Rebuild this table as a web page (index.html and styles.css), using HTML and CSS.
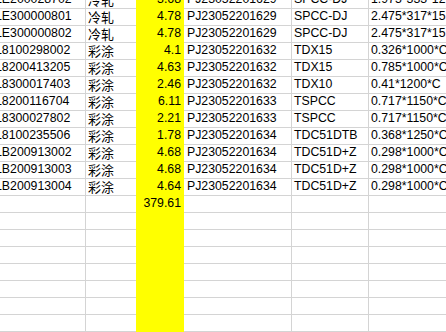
FILE: index.html
```html
<!DOCTYPE html>
<html>
<head>
<meta charset="utf-8">
<link rel="stylesheet" href="styles.css">
</head>
<body>
<div class="sheet">
  <div class="row"><div class="c a">LE200028702</div><div class="c b">冷轧</div><div class="c n">3.68</div><div class="c d">PJ23052201629</div><div class="c e">SPCC-DJ</div><div class="c f">1.975*333*12</div></div>
  <div class="row"><div class="c a">LE300000801</div><div class="c b">冷轧</div><div class="c n">4.78</div><div class="c d">PJ23052201629</div><div class="c e">SPCC-DJ</div><div class="c f">2.475*317*15</div></div>
  <div class="row"><div class="c a">LE300000802</div><div class="c b">冷轧</div><div class="c n">4.78</div><div class="c d">PJ23052201629</div><div class="c e">SPCC-DJ</div><div class="c f">2.475*317*15</div></div>
  <div class="row"><div class="c a">L8100298002</div><div class="c b">彩涂</div><div class="c n">4.1</div><div class="c d">PJ23052201632</div><div class="c e">TDX15</div><div class="c f">0.326*1000*C</div></div>
  <div class="row"><div class="c a">L8200413205</div><div class="c b">彩涂</div><div class="c n">4.63</div><div class="c d">PJ23052201632</div><div class="c e">TDX15</div><div class="c f">0.785*1000*C</div></div>
  <div class="row"><div class="c a">L8300017403</div><div class="c b">彩涂</div><div class="c n">2.46</div><div class="c d">PJ23052201632</div><div class="c e">TDX10</div><div class="c f">0.41*1200*C</div></div>
  <div class="row"><div class="c a">L8200116704</div><div class="c b">彩涂</div><div class="c n">6.11</div><div class="c d">PJ23052201633</div><div class="c e">TSPCC</div><div class="c f">0.717*1150*C</div></div>
  <div class="row"><div class="c a">L8300027802</div><div class="c b">彩涂</div><div class="c n">2.21</div><div class="c d">PJ23052201633</div><div class="c e">TSPCC</div><div class="c f">0.717*1150*C</div></div>
  <div class="row"><div class="c a">L8100235506</div><div class="c b">彩涂</div><div class="c n">1.78</div><div class="c d">PJ23052201634</div><div class="c e">TDC51DTB</div><div class="c f">0.368*1250*C</div></div>
  <div class="row"><div class="c a">LB200913002</div><div class="c b">彩涂</div><div class="c n">4.68</div><div class="c d">PJ23052201634</div><div class="c e">TDC51D+Z</div><div class="c f">0.298*1000*C</div></div>
  <div class="row"><div class="c a">LB200913003</div><div class="c b">彩涂</div><div class="c n">4.68</div><div class="c d">PJ23052201634</div><div class="c e">TDC51D+Z</div><div class="c f">0.298*1000*C</div></div>
  <div class="row"><div class="c a">LB200913004</div><div class="c b">彩涂</div><div class="c n">4.64</div><div class="c d">PJ23052201634</div><div class="c e">TDC51D+Z</div><div class="c f">0.298*1000*C</div></div>
  <div class="row"><div class="c a"></div><div class="c b"></div><div class="c n">379.61</div><div class="c d"></div><div class="c e"></div><div class="c f"></div></div>
  <div class="row"><div class="c a"></div><div class="c b"></div><div class="c n"></div><div class="c d"></div><div class="c e"></div><div class="c f"></div></div>
  <div class="row"><div class="c a"></div><div class="c b"></div><div class="c n"></div><div class="c d"></div><div class="c e"></div><div class="c f"></div></div>
  <div class="row"><div class="c a"></div><div class="c b"></div><div class="c n"></div><div class="c d"></div><div class="c e"></div><div class="c f"></div></div>
  <div class="row"><div class="c a"></div><div class="c b"></div><div class="c n"></div><div class="c d"></div><div class="c e"></div><div class="c f"></div></div>
  <div class="row"><div class="c a"></div><div class="c b"></div><div class="c n"></div><div class="c d"></div><div class="c e"></div><div class="c f"></div></div>
  <div class="row"><div class="c a"></div><div class="c b"></div><div class="c n"></div><div class="c d"></div><div class="c e"></div><div class="c f"></div></div>
  <div class="row"><div class="c a"></div><div class="c b"></div><div class="c n"></div><div class="c d"></div><div class="c e"></div><div class="c f"></div></div>
</div>
</body>
</html>
```
FILE: styles.css
```css
html, body {
  margin: 0;
  padding: 0;
  background: #ffffff;
  overflow: hidden;
  width: 446px;
  height: 332px;
}
.sheet {
  margin-top: -8px;
  margin-left: -7px;
  font-family: "Liberation Sans", Arial, "Noto Sans CJK SC", sans-serif;
  font-size: 12.3px;
  color: #000;
}
.row {
  display: grid;
  grid-template-columns: 93px 50px 48px 108px 77px 200px;
  height: 17px;
}
.c {
  box-sizing: border-box;
  height: 17px;
  border-bottom: 1px solid #d4d4d4;
  border-right: 1px solid #d4d4d4;
  display: flex;
  align-items: flex-end;
  padding: 0 2px 1px 2px;
  line-height: 15px;
  white-space: nowrap;
  overflow: hidden;
}
.b {
  border-right: none;
  padding-left: 2px;
  font-size: 13px;
  font-family: "Noto Sans CJK SC", sans-serif;
}
.n {
  background: #ffff00;
  border-color: #ffff00;
  border-right: none;
  justify-content: flex-end;
  padding-right: 3px;
}
.d { padding-left: 3px; }
.f { border-right: none; overflow: visible; }
```
